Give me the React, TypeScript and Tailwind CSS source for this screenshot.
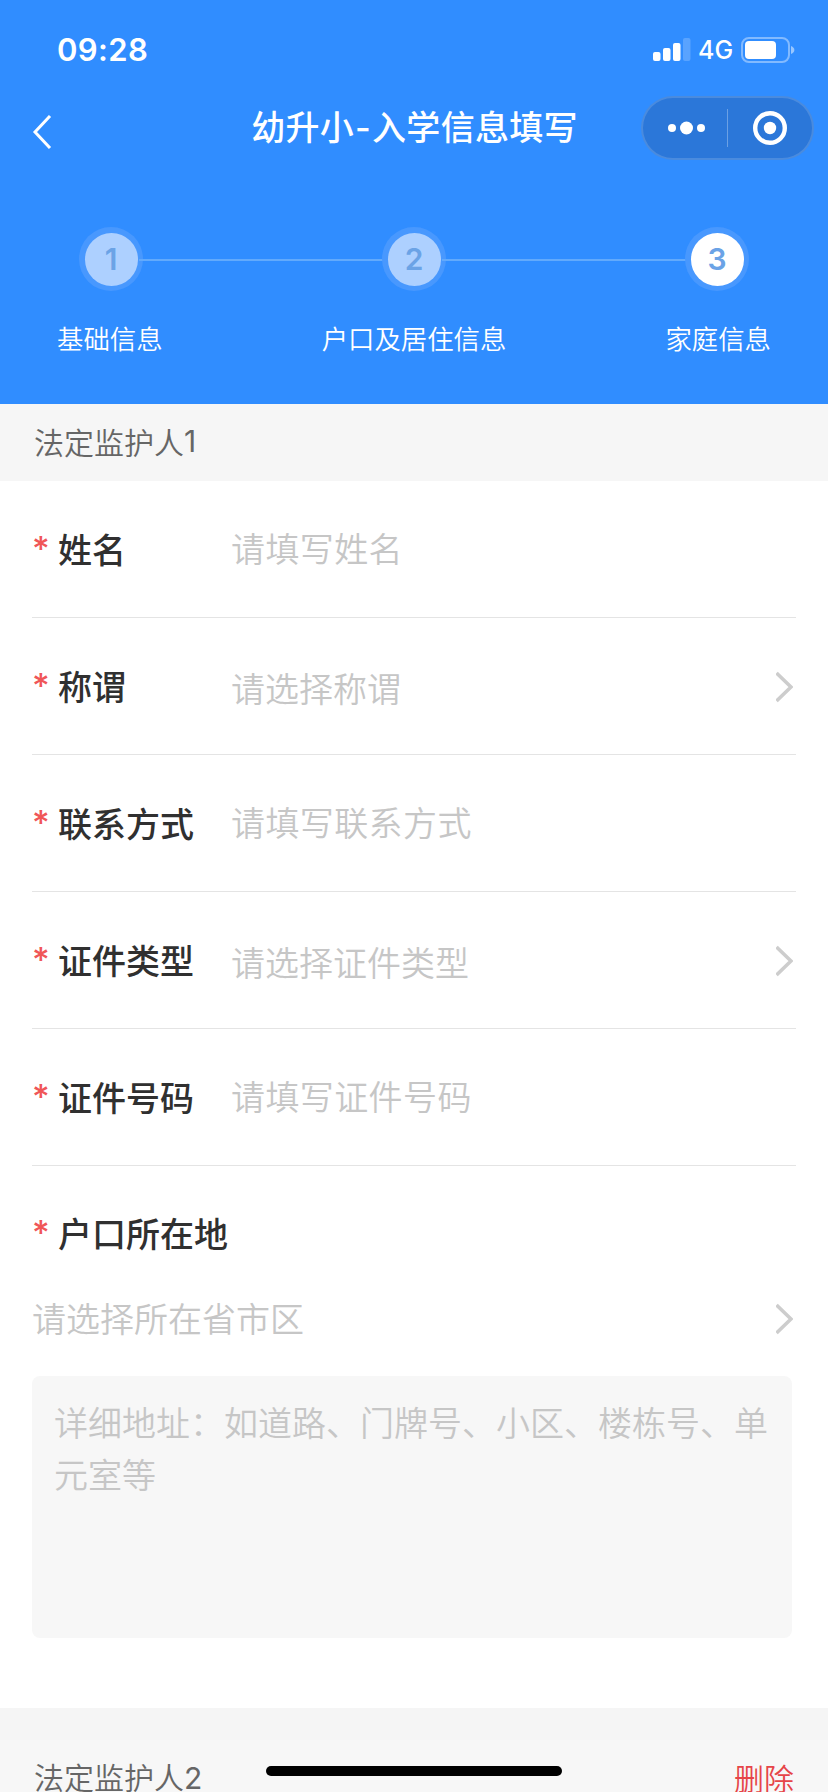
interface Field {
  label: string;
  placeholder: string;
  select?: boolean;
}

const steps = ["基础信息", "户口及居住信息", "家庭信息"];
const currentStep = 3;

const fields: Field[] = [
  { label: "姓名", placeholder: "请填写姓名" },
  { label: "称谓", placeholder: "请选择称谓", select: true },
  { label: "联系方式", placeholder: "请填写联系方式" },
  { label: "证件类型", placeholder: "请选择证件类型", select: true },
  { label: "证件号码", placeholder: "请填写证件号码" },
];

function ChevronRight() {
  return (
    <svg className="ml-auto mt-0.5 shrink-0" width="17" height="32" viewBox="0 0 17 32" fill="none">
      <path d="M0.500 2L15 16L0.500 30" stroke="#cdcdcd" strokeWidth="3.600" />
    </svg>
  );
}

function StatusBar() {
  return (
    <div className="flex h-24 items-center justify-between pl-[57px] pr-[33px] pt-1">
      <span className="-mt-0.5 font-['Inter',sans-serif] text-[31px] font-semibold leading-none tracking-[0.4px]">
        09:28
      </span>
      <div className="flex items-center">
        <svg width="38" height="24" viewBox="0 0 38 24" fill="white">
          <rect x="0" y="14" width="7.5" height="9" rx="2" />
          <rect x="10" y="10" width="7.5" height="13" rx="2" />
          <rect x="20" y="5" width="7.5" height="18" rx="2" />
          <rect x="30" y="0" width="7.5" height="23" rx="2" fillOpacity="0.2" />
        </svg>
        <span className="ml-[7px] w-9 font-['Inter',sans-serif] text-[25px] font-medium leading-none">
          4G
        </span>
        <svg className="ml-[7px]" width="54" height="26" viewBox="0 0 54 26" fill="none">
          <rect x="1" y="1" width="47" height="24" rx="7" stroke="white" strokeOpacity="0.4" strokeWidth="2" />
          <rect x="4" y="4" width="31" height="18" rx="4" fill="white" />
          <path d="M50 9c4.500 1.500 4.500 6.500 0 8z" fill="white" fillOpacity="0.5" />
        </svg>
      </div>
    </div>
  );
}

function NavBar() {
  return (
    <div className="grid h-16 grid-cols-[1fr_auto_1fr] items-center pl-8 pr-3.5">
      <svg className="mt-2" width="20" height="34" viewBox="0 0 20 34" fill="none">
        <path d="M18 1L3 17L18 33" stroke="white" strokeWidth="3" />
      </svg>
      <h1 className="-ml-[17px] pb-0.5 text-[34px] font-medium leading-none tracking-[0.3px]">
        幼升小<span className="mx-px font-['Inter',sans-serif]">-</span>入学信息填写
      </h1>
      <div className="flex h-16 w-[173px] items-center justify-self-end rounded-full border-2 border-white/15 bg-[#2b77d9]">
        <svg className="ml-6" width="38" height="14" viewBox="0 0 38 14" fill="white">
          <circle cx="5" cy="7" r="4" />
          <circle cx="19.500" cy="7" r="6.500" />
          <circle cx="34" cy="7" r="4" />
        </svg>
        <div className="ml-[22px] h-[38px] w-px bg-white/30" />
        <svg className="ml-[25px]" width="34" height="34" viewBox="0 0 34 34" fill="none">
          <circle cx="17" cy="17" r="14.800" stroke="white" strokeWidth="4.400" />
          <circle cx="17" cy="17" r="6.200" fill="white" />
        </svg>
      </div>
    </div>
  );
}

function Stepper() {
  return (
    <div className="flex flex-col pt-[67px]">
      <div className="flex items-center px-[79px]">
        {steps.map((step, i) => (
          <div key={step} className={i > 0 ? "flex grow items-center" : "flex items-center"}>
            {i > 0 && <div className="-mx-1 mt-0.5 h-0.5 grow bg-[#62aafc]" />}
            <div className="flex size-16 items-center justify-center rounded-full bg-[#4898fe]">
              <div
                className={`flex size-[53px] items-center justify-center rounded-full font-['Inter',sans-serif] text-[30px] font-semibold leading-none text-[#6ba3e6] ${
                  i + 1 === currentStep ? "bg-white" : "bg-[#add0ff]"
                }`}
              >
                {i + 1}
              </div>
            </div>
          </div>
        ))}
      </div>
      <div className="mt-7 flex justify-between px-[57px] text-[26.400px] font-[350] leading-[38px]">
        {steps.map((step) => (
          <span key={step}>{step}</span>
        ))}
      </div>
    </div>
  );
}

function Label({ text }: { text: string }) {
  return (
    <div className="flex items-center">
      <span className="w-[26px] font-['Inter',sans-serif] text-[34px] font-medium leading-none text-[#f05658]">
        *
      </span>
      <span className="text-[34px] font-medium leading-none text-[#303030]">{text}</span>
    </div>
  );
}

export default function App() {
  return (
    <div className="relative h-[1792px] w-[828px] overflow-hidden bg-white font-['Noto_Sans_CJK_SC',sans-serif]">
      <header className="h-[404px] bg-[#308dff] text-white">
        <StatusBar />
        <NavBar />
        <Stepper />
      </header>

      <div className="flex h-[77px] items-center bg-[#f6f6f6] pb-0.5 pl-[34px] text-[30px] font-[350] text-[#666]">
        法定监护人<span className="font-['Inter',sans-serif] font-normal">1</span>
      </div>

      <main className="px-8">
        {fields.map((field) => (
          <div
            key={field.label}
            className="flex h-[137px] items-center border-b border-[#e4e4e4] pr-[3px]"
          >
            <div className="w-[199px]">
              <Label text={field.label} />
            </div>
            <span
              className={`text-[34px] font-[350] leading-none text-[#c6c6c6] ${
                field.select ? "pt-[3px]" : "pb-0.5 tracking-[0.4px]"
              }`}
            >
              {field.placeholder}
            </span>
            {field.select && <ChevronRight />}
          </div>
        ))}

        {/* Registered residence */}
        <div className="flex h-[136px] items-center pb-0.5">
          <Label text="户口所在地" />
        </div>
        <div className="flex h-8 items-center pr-[3px]">
          <span className="text-[34px] font-[350] leading-none text-[#c6c6c6]">请选择所在省市区</span>
          <ChevronRight />
        </div>
        <div className="mr-1 mt-[42px] h-[262px] rounded-lg bg-[#f7f7f7] px-[22px] pt-5 text-[34px] font-[350] leading-[52px] text-[#c6c6c6]">
          详细地址：如道路、门牌号、小区、楼栋号、单元室等
        </div>
      </main>

      <div className="mt-[70px] h-8 bg-[#f5f5f5]" />
      <div className="flex h-[77px] items-center justify-between bg-[#f7f7f7] pb-0.5 pl-[34px] pr-[34px] text-[30px] font-[350] text-[#666]">
        <span>
          法定监护人<span className="font-['Inter',sans-serif] font-normal">2</span>
        </span>
        <span className="text-[#e64548]">删除</span>
      </div>

      {/* Home indicator */}
      <div className="absolute left-[266px] top-[1766px] h-2.5 w-[296px] rounded-full bg-black" />
    </div>
  );
}
